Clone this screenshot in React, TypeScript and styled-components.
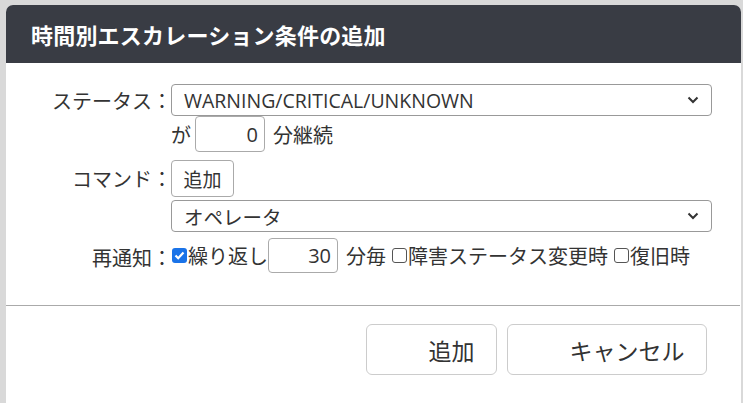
import styled, { createGlobalStyle } from 'styled-components';

const GlobalStyle = createGlobalStyle`
  html, body {
    margin: 0;
    padding: 0;
    background: #d9d9d9;
    overflow: hidden;
  }
  body {
    font-family: 'Open Sans', 'Noto Sans CJK JP', sans-serif;
    color: #333;
  }
`;

const font = `'Open Sans', 'Noto Sans CJK JP', sans-serif`;

function Chevron() {
  return (
    <svg width="12" height="8" viewBox="0 0 12 8">
      <path d="M1.5 1.5 L6 6 L10.5 1.5" fill="none" stroke="#333" strokeWidth="2" />
    </svg>
  );
}

function Check() {
  return (
    <svg width="11" height="9" viewBox="0 0 11 9">
      <path d="M1.5 4.5 L4.2 7.2 L9.5 1.5" fill="none" stroke="#fff" strokeWidth="2.2" />
    </svg>
  );
}

function App() {
  return (
    <>
      <GlobalStyle />
      <Page>
        <Dialog>
          <Header>時間別エスカレーション条件の追加</Header>
          <Body>
            <Label $h={32}>ステータス：</Label>
            <Field>
              <Select $gap={0}>
                <span>WARNING/CRITICAL/UNKNOWN</span>
                <Chevron />
              </Select>
              <Line>
                が
                <NumberBox $w={70} $h={36}>0</NumberBox>
                <Unit>分継続</Unit>
              </Line>
            </Field>

            <Label $h={37} $top={8}>コマンド：</Label>
            <Field $top={8}>
              <SmallButton>追加</SmallButton>
              <Select $gap={3}>
                <span>オペレータ</span>
                <Chevron />
              </Select>
            </Field>

            <Label $h={38} $top={6}>再通知：</Label>
            <Field $top={6}>
              <Line>
                <Box $checked>
                  <Check />
                </Box>
                繰り返し
                <NumberBox $w={70} $h={35} $flush>30</NumberBox>
                <Unit>分毎</Unit>
                <Box $space />
                障害ステータス変更時
                <Box $space />
                復旧時
              </Line>
            </Field>
          </Body>
          <Divider />
          <Footer>
            <BigButton $w={131}>追加</BigButton>
            <BigButton $w={200}>キャンセル</BigButton>
          </Footer>
        </Dialog>
      </Page>
    </>
  );
}

const Page = styled.div`
  width: 743px;
  height: 403px;
  padding: 5px 0 0 6px;
  box-sizing: border-box;
  overflow: hidden;
`;

const Dialog = styled.div`
  width: 735px;
  height: 398px;
  background: #fff;
  border-radius: 7px 7px 0 0;
  box-sizing: border-box;
`;

const Header = styled.div`
  height: 58px;
  background: #393c44;
  border-radius: 7px 7px 0 0;
  color: #fff;
  font-family: ${font};
  font-weight: 700;
  font-size: 22px;
  display: flex;
  align-items: center;
  padding-left: 25px;
  letter-spacing: 0.2px;
`;

const Body = styled.div`
  display: grid;
  grid-template-columns: 159px 541px;
  column-gap: 6px;
  padding-top: 21px;
`;

const Label = styled.div<{ $h: number; $top?: number }>`
  height: ${(p) => p.$h}px;
  margin-top: ${(p) => p.$top ?? 0}px;
  display: flex;
  align-items: center;
  justify-content: flex-end;
  font-size: 20px;
  color: #333;
  white-space: nowrap;
  margin-right: -7px;
`;

const Field = styled.div<{ $top?: number }>`
  display: flex;
  flex-direction: column;
  align-items: flex-start;
  margin-top: ${(p) => p.$top ?? 0}px;
`;

const Select = styled.div<{ $gap: number }>`
  width: 541px;
  height: 32px;
  margin-top: ${(p) => p.$gap}px;
  box-sizing: border-box;
  border: 1px solid #999;
  border-radius: 4px;
  display: flex;
  align-items: center;
  justify-content: space-between;
  padding: 0 12px 0 12px;
  font-size: 19.5px;
  color: #333;
`;

const Line = styled.div`
  display: flex;
  align-items: center;
  font-size: 20px;
  color: #333;
  white-space: nowrap;
`;

const NumberBox = styled.div<{ $w: number; $h: number; $flush?: boolean }>`
  width: ${(p) => p.$w}px;
  height: ${(p) => p.$h}px;
  box-sizing: border-box;
  border: 1px solid #aaa;
  border-radius: 4px;
  margin-left: ${(p) => (p.$flush ? 0 : 4)}px;
  display: flex;
  align-items: center;
  justify-content: flex-end;
  padding-right: 6px;
  font-size: 20px;
  color: #333;
`;

const Unit = styled.span`
  margin-left: 8px;
`;

const Box = styled.span<{ $checked?: boolean; $space?: boolean }>`
  width: 15px;
  height: 15px;
  box-sizing: border-box;
  margin: 0 1px 0 ${(p) => (p.$space ? 6 : 1)}px;
  border-radius: 3px;
  display: inline-flex;
  align-items: center;
  justify-content: center;
  background: ${(p) => (p.$checked ? '#1a73e8' : '#fff')};
  border: ${(p) => (p.$checked ? 'none' : '1px solid #555')};
`;

const SmallButton = styled.div`
  width: 63px;
  height: 37px;
  box-sizing: border-box;
  border: 1px solid #aaa;
  border-radius: 4px;
  display: flex;
  align-items: center;
  justify-content: center;
  font-size: 19px;
  color: #333;
`;

const Divider = styled.div`
  height: 1px;
  background: #aaa;
  margin-top: 29px;
  width: 734px;
`;

const Footer = styled.div`
  display: flex;
  justify-content: flex-end;
  gap: 10px;
  padding: 18px 34px 0 0;
`;

const BigButton = styled.div<{ $w: number }>`
  width: ${(p) => p.$w}px;
  height: 51px;
  box-sizing: border-box;
  border: 1px solid #ccc;
  border-radius: 6px;
  display: flex;
  align-items: center;
  justify-content: center;
  padding: 0 10px 0 50px;
  font-size: 23px;
  color: #333;
`;

export default App;
